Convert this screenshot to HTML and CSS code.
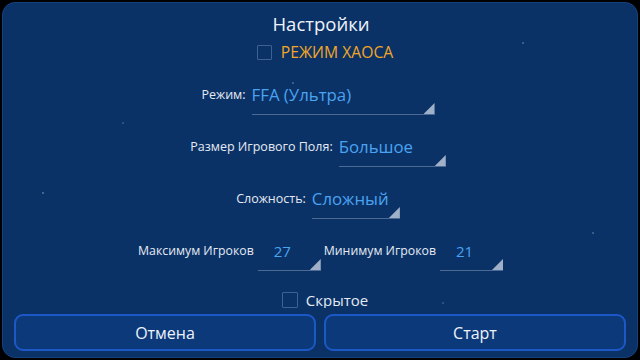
FILE: index.html
```html
<!DOCTYPE html>
<html lang="ru">
<head>
<meta charset="utf-8">
<title>Настройки</title>
<link rel="stylesheet" href="styles.css">
</head>
<body>
<div class="panel">
  <div class="content">
    <div class="title">Настройки</div>
    <div class="chaos">
      <span class="box"></span>
      <span class="chaos-label">РЕЖИМ ХАОСА</span>
    </div>
    <div class="row first">
      <span class="label">Режим:</span>
      <span class="drop w1">FFA (Ультра)<i class="tri"></i></span>
    </div>
    <div class="row">
      <span class="label">Размер Игрового Поля:</span>
      <span class="drop w2">Большое<i class="tri"></i></span>
    </div>
    <div class="row">
      <span class="label">Сложность:</span>
      <span class="drop w3">Сложный<i class="tri"></i></span>
    </div>
    <div class="row players">
      <span class="label">Максимум Игроков</span>
      <span class="drop num">27<i class="tri"></i></span>
      <span class="label">Минимум Игроков</span>
      <span class="drop num">21<i class="tri"></i></span>
    </div>
    <div class="hidden-row">
      <span class="box"></span>
      <span class="hidden-label">Скрытое</span>
    </div>
  </div>
  <div class="footer">
    <button class="btn">Отмена</button>
    <button class="btn">Старт</button>
  </div>
</div>
</body>
</html>
```

FILE: styles.css
```css
html, body {
  margin: 0;
  padding: 0;
  background: #000;
}
body {
  width: 640px;
  height: 360px;
  padding: 2px;
  box-sizing: border-box;
  font-family: "Open Sans", "DejaVu Sans", sans-serif;
}
.panel {
  width: 636px;
  height: 356px;
  box-sizing: border-box;
  border-radius: 13px;
  border: 1px solid #14427f;
  background-color: #0b3266;
  background-image:
    radial-gradient(circle at 40px 190px, rgba(255,255,255,0.25) 0 1px, transparent 1.5px),
    radial-gradient(circle at 520px 40px, rgba(255,255,255,0.2) 0 1px, transparent 1.5px),
    radial-gradient(circle at 290px 80px, rgba(255,255,255,0.2) 0 1px, transparent 1.5px),
    radial-gradient(circle at 590px 230px, rgba(255,255,255,0.2) 0 1px, transparent 1.5px),
    radial-gradient(circle at 120px 120px, rgba(255,255,255,0.15) 0 1px, transparent 1.5px),
    radial-gradient(circle at 440px 300px, rgba(255,255,255,0.15) 0 1px, transparent 1.5px);
  display: flex;
  flex-direction: column;
  overflow: hidden;
}
.content {
  height: 305px;
  flex: none;
  overflow: hidden;
  padding-top: 7px;
  box-sizing: border-box;
  display: flex;
  flex-direction: column;
  align-items: center;
}
.title {
  height: 28px;
  flex: none;
  line-height: 28px;
  font-size: 18.5px;
  color: #eef3fa;
  margin-left: 2px;
}
.chaos {
  height: 28px;
  flex: none;
  display: flex;
  align-items: center;
  gap: 9px;
  margin-left: 10px;
}
.box {
  width: 13px;
  height: 13px;
  border: 1px solid #3d6191;
  border-radius: 1px;
}
.chaos-label {
  font-size: 15.7px;
  color: #f2a626;
  line-height: 28px;
}
.row {
  height: 52px;
  flex: none;
  display: flex;
  align-items: flex-start;
  margin-left: -4px;
}
.row.first {
  margin-top: 17px;
}
.row.players {
  margin-left: 4px;
}
.label {
  font-size: 12.5px;
  line-height: 24px;
  color: #e4eaf3;
  margin-right: 6px;
}
.players .label {
  font-size: 12.3px;
  margin-right: 4px;
}
.drop {
  position: relative;
  font-size: 16.8px;
  line-height: 24px;
  color: #4aa3f2;
  padding-bottom: 7px;
  border-bottom: 1.5px solid #4c6a94;
  box-sizing: content-box;
}
.w1 { width: 183px; }
.w2 { width: 107px; }
.w3 { width: 88px; }
.num {
  width: 47px;
  padding-left: 16px;
  font-size: 15px;
  margin-right: 3px;
}
.drop .tri {
  position: absolute;
  right: 0;
  bottom: 0;
  width: 11px;
  height: 11px;
  background: #9fb0c8;
  clip-path: polygon(100% 0, 100% 100%, 0 100%);
}
.hidden-row {
  flex: none;
  display: flex;
  align-items: center;
  height: 24px;
  gap: 8px;
  margin-top: -3px;
  margin-left: 10px;
}
.hidden-row .box {
  width: 14px;
  height: 14px;
}
.hidden-label {
  font-size: 15px;
  line-height: 24px;
  color: #e4eaf3;
}
.footer {
  flex: 1;
  display: flex;
  gap: 8px;
  padding: 6px 11px 6px 11px;
  box-sizing: border-box;
}
.btn {
  flex: 1;
  height: 37px;
  border-radius: 9px;
  border: 2px solid #1c58c6;
  background: #0c397a;
  color: #eef3fa;
  font-family: "Open Sans", "DejaVu Sans", sans-serif;
  font-size: 16px;
}
```
